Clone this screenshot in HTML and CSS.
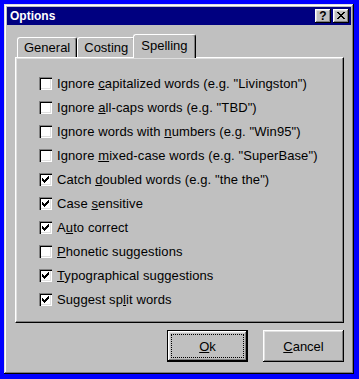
FILE: index.html
```html
<!DOCTYPE html>
<html lang="en">
<head>
    <meta charset="UTF-8">
    <title>Options</title>
    <link rel="stylesheet" href="styles.css">
</head>
<body>
    <div class="window">
        <div class="titlebar">
            <span class="title">Options</span>
            <span class="title-btn help">?</span>
            <span class="title-btn">
                <svg width="16" height="14" viewBox="0 0 16 14" shape-rendering="crispEdges">
                    <path d="M4 3h2v1H4zM10 3h2v1h-2zM5 4h2v1H5zM9 4h2v1H9zM6 5h4v1H6zM7 6h2v1H7zM6 7h4v1H6zM5 8h2v1H5zM9 8h2v1H9zM4 9h2v1H4zM10 9h2v1h-2z" fill="#000"/>
                </svg>
            </span>
        </div>

        <div class="dialog-body">
            <div class="tabs">
                <div class="tab">General</div>
                <div class="tab">Costing</div>
                <div class="tab active">Spelling</div>
            </div>

            <div class="panel">
                <label class="option"><span class="check"></span><span>Ignore <u>c</u>apitalized words (e.g. "Livingston")</span></label>
                <label class="option"><span class="check"></span><span>Ignore <u>a</u>ll-caps words (e.g. "TBD")</span></label>
                <label class="option"><span class="check"></span><span>Ignore words with <u>n</u>umbers (e.g. "Win95")</span></label>
                <label class="option"><span class="check"></span><span>Ignore <u>m</u>ixed-case words (e.g. "SuperBase")</span></label>
                <label class="option"><span class="check checked"></span><span>Catch <u>d</u>oubled words (e.g. "the the")</span></label>
                <label class="option"><span class="check checked"></span><span>Case <u>s</u>ensitive</span></label>
                <label class="option"><span class="check checked"></span><span>A<u>u</u>to correct</span></label>
                <label class="option"><span class="check"></span><span><u>P</u>honetic suggestions</span></label>
                <label class="option"><span class="check checked"></span><span><u>T</u>ypographical suggestions</span></label>
                <label class="option"><span class="check checked"></span><span>Suggest sp<u>l</u>it words</span></label>
            </div>

            <div class="footer">
                <button class="btn default"><u>O</u>k</button>
                <button class="btn"><u>C</u>ancel</button>
            </div>
        </div>
    </div>

    <script>
        // draw the tick into every checked box
        const tick = '<svg width="13" height="13" viewBox="0 0 13 13" shape-rendering="crispEdges">' +
            '<path d="M3 5h1v3H3zM4 6h1v3H4zM5 7h1v3H5zM6 6h1v3H6zM7 5h1v3H7zM8 4h1v3H8zM9 3h1v3H9z" fill="#000"/></svg>';
        document.querySelectorAll('.check.checked').forEach(box => {
            box.innerHTML = tick;
        });
    </script>
</body>
</html>
```

FILE: styles.css
```css
body {
    margin: 0;
    background: #0000ff;
    font-family: "Liberation Sans", Arial, sans-serif;
    font-size: 13px;
    color: #000;
}

.window {
    box-sizing: border-box;
    width: 350px;
    height: 370px;
    margin: 4px;
    padding: 3px;
    background: #c0c0c0;
    box-shadow: inset -1px -1px #000, inset 1px 1px #dfdfdf,
                inset -2px -2px #808080, inset 2px 2px #fff;
}

.titlebar {
    display: flex;
    align-items: center;
    gap: 2px;
    height: 18px;
    padding: 0 2px 0 3px;
    background: #000080;
    color: #fff;
}

.title {
    flex: 1;
    font-weight: bold;
    font-size: 12px;
}

.title-btn {
    display: flex;
    align-items: center;
    justify-content: center;
    width: 16px;
    height: 14px;
    background: #c0c0c0;
    color: #000;
    box-shadow: inset -1px -1px #000, inset 1px 1px #fff,
                inset -2px -2px #808080, inset 2px 2px #dfdfdf;
}

.help {
    font-weight: bold;
    font-size: 12px;
    line-height: 14px;
}

.dialog-body {
    padding: 9px 7px 0 8px;
}

.tabs {
    display: flex;
    align-items: flex-end;
    height: 23px;
    padding-left: 2px;
}

.tab {
    box-sizing: border-box;
    height: 20px;
    padding: 0 6px;
    line-height: 19px;
    border: 1px solid #fff;
    border-bottom: none;
    border-right-color: #000;
    border-radius: 3px 3px 0 0;
    box-shadow: inset -1px 0 #808080;
}

.tab.active {
    position: relative;
    z-index: 1;
    height: 24px;
    margin: 0 -2px -1px;
    padding: 0 7px;
    line-height: 21px;
    background: #c0c0c0;
}

.panel {
    box-sizing: border-box;
    height: 266px;
    padding: 13px 0 0 23px;
    border: 1px solid;
    border-color: #fff #000 #000 #fff;
    box-shadow: inset -1px -1px #808080, inset 1px 1px #dfdfdf;
}

.option {
    display: flex;
    align-items: center;
    gap: 5px;
    height: 24px;
    white-space: nowrap;
    letter-spacing: 0.1px;
}

.check {
    box-sizing: border-box;
    flex: none;
    width: 13px;
    height: 13px;
    background: #fff;
    box-shadow: inset 1px 1px #808080, inset 2px 2px #000,
                inset -1px -1px #fff, inset -2px -2px #dfdfdf;
}

.check svg {
    display: block;
}

.footer {
    display: flex;
    justify-content: flex-end;
    gap: 15px;
    padding-top: 7px;
}

.btn {
    box-sizing: border-box;
    width: 81px;
    height: 32px;
    padding: 0;
    border: none;
    background: #c0c0c0;
    font: inherit;
    color: #000;
    box-shadow: inset -1px -1px #000, inset 1px 1px #fff,
                inset -2px -2px #808080, inset 2px 2px #dfdfdf;
}

.btn.default {
    box-shadow: inset 0 0 0 1px #000, inset -2px -2px #000, inset 2px 2px #fff,
                inset -3px -3px #808080, inset 3px 3px #dfdfdf;
    outline: 1px dotted #000;
    outline-offset: -5px;
}
```
